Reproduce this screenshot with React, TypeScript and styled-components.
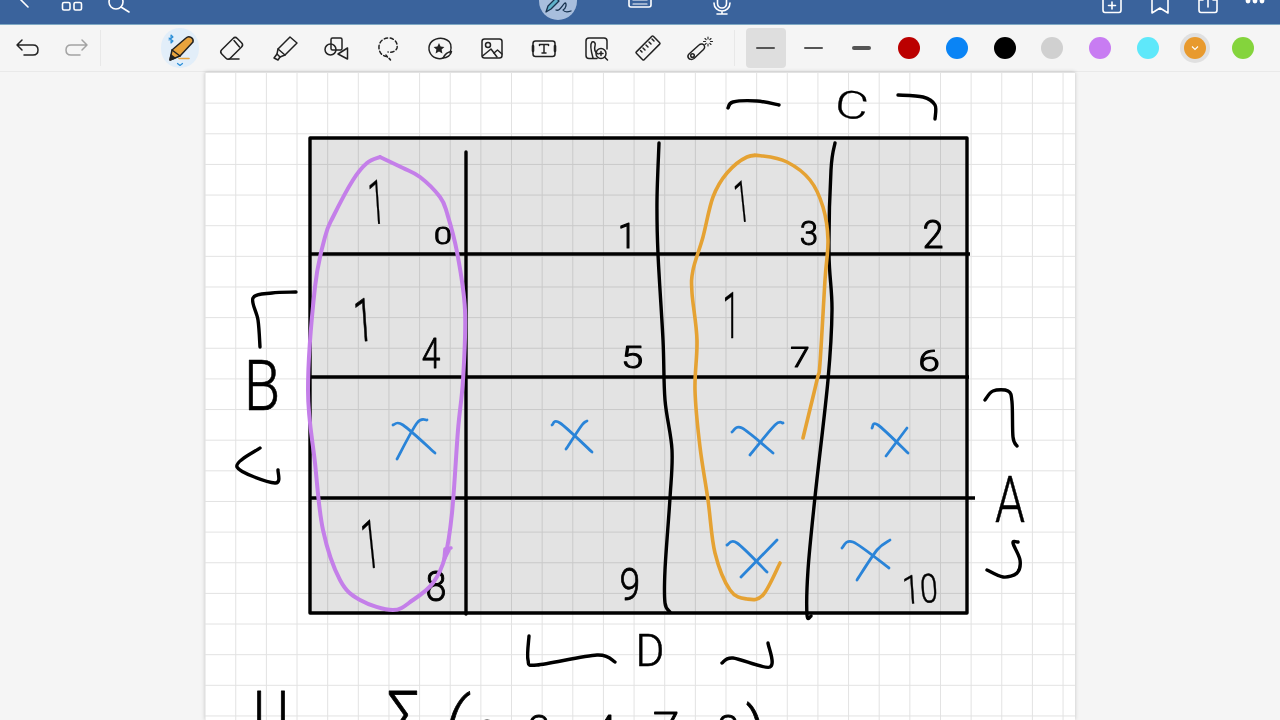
// notes app screenshot: toolbar on top, sheet with a hand drawn K-map
import React from "react";
import styled, { createGlobalStyle } from "styled-components";

const GlobalStyle = createGlobalStyle`
    html, body {
        margin: 0;
        padding: 0;
        background: #f5f5f5;
        font-family: "Lato", "Liberation Sans", sans-serif;
    }
`;

const Page = styled.div`
    width: 1280px;
    height: 720px;
    display: flex;
    flex-direction: column;
    overflow: hidden;
`;

const TopBar = styled.header`
    height: 24px;
    flex: none;
    display: flex;
    background: #3a639c;
    border-bottom: 1px solid #7fa9c4;
    overflow: hidden;
`;

const TopGroup = styled.div<{ $gap?: number; $left?: string }>`
    display: flex;
    gap: ${(props) => props.$gap ?? 0}px;
    margin-left: ${(props) => props.$left ?? "0"};
`;

const TopIcon = styled.svg`
    width: 48px;
    height: 24px;
    flex: none;
    fill: none;
    stroke: #fff;
    stroke-width: 1.6;
    stroke-linecap: round;
    stroke-linejoin: round;
`;

const ToolBar = styled.nav`
    height: 47px;
    flex: none;
    display: flex;
    align-items: center;
    background: #f5f5f5;
    border-bottom: 1px solid #e9e9e9;
    box-sizing: border-box;
    padding-left: 4px;
`;

const Divider = styled.div<{ $left: number; $right: number }>`
    width: 1px;
    height: 36px;
    background: #e8e8e8;
    margin-left: ${(props) => props.$left}px;
    margin-right: ${(props) => props.$right}px;
`;

const ToolButton = styled.button<{ $width: number }>`
    width: ${(props) => props.$width}px;
    height: 47px;
    flex: none;
    padding: 0;
    border: 0;
    background: transparent;
    display: flex;
    align-items: center;
    justify-content: center;
`;

const ToolIcon = styled.svg<{ $muted?: boolean }>`
    width: 36px;
    height: 36px;
    overflow: visible;
    fill: none;
    stroke: ${(props) => (props.$muted ? "#a3a3a3" : "#222")};
    stroke-width: 1.5;
    stroke-linecap: round;
    stroke-linejoin: round;
`;

const PenHalo = styled.div`
    width: 38px;
    height: 40px;
    border-radius: 19px;
    background: #e2eef9;
    display: flex;
    align-items: center;
    justify-content: center;
`;

const StrokeBox = styled.div<{ $active?: boolean }>`
    width: 40px;
    height: 40px;
    border-radius: 4px;
    background: ${(props) => (props.$active ? "#dedede" : "transparent")};
    display: flex;
    align-items: center;
    justify-content: center;
`;

const StrokeLine = styled.div<{ $thick: number }>`
    width: 19px;
    height: ${(props) => props.$thick}px;
    border-radius: 2px;
    background: #555;
`;

const SwatchRing = styled.div<{ $active?: boolean }>`
    width: 30px;
    height: 30px;
    border-radius: 50%;
    background: ${(props) => (props.$active ? "#e0e0e0" : "transparent")};
    display: flex;
    align-items: center;
    justify-content: center;
`;

const Swatch = styled.div<{ $color: string }>`
    width: 22px;
    height: 22px;
    border-radius: 50%;
    background: ${(props) => props.$color};
    display: flex;
    align-items: center;
    justify-content: center;
`;

const Workspace = styled.main`
    flex: 1;
    min-height: 0;
    display: flex;
    justify-content: center;
    background: #f5f5f5;
`;

const Sheet = styled.section`
    width: 870px;
    height: 100%;
    position: relative;
    background-color: #fff;
    background-image:
        linear-gradient(to right, #e2e2e2 1.2px, transparent 1.2px),
        linear-gradient(to bottom, #e2e2e2 1.2px, transparent 1.2px);
    background-size: 30.65px 30.65px;
    background-position: -0.4px 0;
    box-shadow: 0 0 4px rgba(0, 0, 0, 0.2);
`;

const Ink = styled.svg`
    position: absolute;
    inset: 0;
    width: 100%;
    height: 100%;
    fill: none;
    stroke-linecap: round;
    stroke-linejoin: round;
`;

const Shade = styled.rect`
    fill: #e3e3e3;
    mix-blend-mode: multiply;
`;

const InkText = styled.text`
    font-family: "Roboto", "Liberation Sans", sans-serif;
    font-weight: 300;
    fill: #000;
    stroke: #000;
    text-anchor: middle;
`;

type Pt = [number, number];

// catmull-rom through the points, good enough for pen strokes
const smooth = (pts: Pt[]) => {
    let d = `M${pts[0][0]} ${pts[0][1]}`;
    for (let i = 0; i < pts.length - 1; i++) {
        const p0 = pts[i - 1] ?? pts[i];
        const p1 = pts[i];
        const p2 = pts[i + 1];
        const p3 = pts[i + 2] ?? p2;
        const c1x = p1[0] + (p2[0] - p0[0]) / 6;
        const c1y = p1[1] + (p2[1] - p0[1]) / 6;
        const c2x = p2[0] - (p3[0] - p1[0]) / 6;
        const c2y = p2[1] - (p3[1] - p1[1]) / 6;
        d += ` C${c1x.toFixed(1)} ${c1y.toFixed(1)} ${c2x.toFixed(1)} ${c2y.toFixed(1)} ${p2[0]} ${p2[1]}`;
    }
    return d;
};

const blackStrokes: Pt[][] = [
    [[466, 152], [466, 614]],
    [[659, 143], [657, 200], [658, 254], [663, 340], [665, 400], [672, 450], [670, 498], [665, 570], [665, 603], [670, 612]],
    [[835, 143], [831, 170], [829, 254], [832, 310], [828, 380], [815, 497], [808, 570], [807, 615], [811, 616]],
    [[296, 292], [272, 293], [253, 298], [258, 320], [260, 347]],
    [[260, 448], [237, 467], [275, 483], [278, 470]],
    [[985, 400], [993, 391], [1008, 391], [1012, 402], [1013, 437], [1017, 446]],
    [[1018, 542], [1013, 543], [1020, 560], [1017, 573], [1003, 577], [987, 570]],
    [[728, 108], [733, 102], [757, 101], [779, 105]],
    [[898, 95], [923, 97], [935, 105], [935, 119]],
    [[529, 636], [528, 660], [537, 665], [597, 655], [615, 662]],
    [[722, 663], [733, 658], [770, 667], [768, 643]],
];

const purpleLoop: Pt[] = [
    [380, 157], [403, 168], [420, 177], [440, 197], [447, 213], [457, 252], [465, 310], [463, 380],
    [458, 430], [452, 513], [445, 557], [433, 583], [413, 600], [393, 610], [360, 600], [340, 580],
    [323, 530], [315, 463], [308, 390], [315, 287], [325, 237], [333, 217], [353, 180], [367, 163], [380, 157],
];

const orangeLoop: Pt[] = [
    [803, 438], [817, 380], [820, 363], [825, 280], [828, 240], [823, 207], [810, 180], [787, 162], [763, 156],
    [747, 157], [727, 173], [713, 197], [703, 237], [693, 270], [692, 293], [697, 340], [695, 390], [700, 447],
    [708, 500], [715, 553], [730, 590], [747, 599], [763, 595], [780, 563],
];

const crosses: Pt[][] = [
    [[393, 425], [403, 425], [435, 453]], [[427, 420], [417, 423], [397, 459]],
    [[552, 425], [560, 423], [592, 452]], [[587, 421], [582, 425], [566, 449]],
    [[732, 432], [742, 428], [773, 453]], [[783, 423], [775, 425], [750, 455]],
    [[872, 428], [878, 425], [908, 453]], [[907, 428], [886, 456]],
    [[727, 545], [737, 543], [767, 572]], [[777, 540], [741, 577]],
    [[842, 548], [853, 542], [889, 568]], [[890, 540], [877, 550], [857, 580]],
];

interface IMark {
    t: string;
    x: number;
    y: number;
    s: number;
    sx?: number;
    r?: number;
    w?: number;
}

const marks: IMark[] = [
    { t: "1", x: 378, y: 224, s: 62, sx: 0.5, r: -4, w: 0.4 },
    { t: "1", x: 365, y: 341, s: 60, sx: 0.6, r: -4, w: 0.8 },
    { t: "1", x: 373, y: 568, s: 68, sx: 0.5, r: -6, w: 0.3 },
    { t: "1", x: 744, y: 222, s: 58, sx: 0.5, r: -6, w: 0.3 },
    { t: "1", x: 731, y: 338, s: 64, sx: 0.5, r: 0, w: 0.3 },
    { t: "0", x: 443, y: 244, s: 23, sx: 1.4, w: 1 },
    { t: "1", x: 627, y: 248, s: 36, sx: 0.9, w: 1.2 },
    { t: "3", x: 809, y: 245, s: 33, w: 1 },
    { t: "2", x: 933, y: 248, s: 38, w: 1 },
    { t: "4", x: 431, y: 368, s: 42, sx: 0.8, w: 0.8 },
    { t: "5", x: 632, y: 368, s: 32, sx: 1.25, w: 1 },
    { t: "7", x: 800, y: 367, s: 28, sx: 1.25, w: 1 },
    { t: "6", x: 929, y: 371, s: 30, sx: 1.3, w: 1 },
    { t: "8", x: 436, y: 601, s: 42, sx: 0.9, w: 1 },
    { t: "9", x: 630, y: 600, s: 44, sx: 0.85, w: 0.8 },
    { t: "10", x: 921, y: 603, s: 40, sx: 0.8, r: -4, w: 0.5 },
    { t: "C", x: 850, y: 118, s: 38, sx: 1.35, r: 8, w: 0.3 },
    { t: "B", x: 262, y: 410, s: 70, sx: 0.85, w: 0.6 },
    { t: "A", x: 1010, y: 522, s: 64, sx: 0.75, w: 0.6 },
    { t: "D", x: 650, y: 666, s: 44, w: 0.6 },
    { t: "U", x: 271, y: 733, s: 60, sx: 0.9, w: 0.8 },
    { t: "Σ", x: 404, y: 741, s: 70, sx: 0.85, w: 0.8 },
    { t: "(", x: 452, y: 745, s: 70, sx: 0.9, r: 10, w: 0.8 },
    { t: "0", x: 487, y: 749, s: 40, w: 0.8 },
    { t: "3", x: 539, y: 744, s: 40, w: 0.8 },
    { t: "4", x: 605, y: 744, s: 40, w: 0.8 },
    { t: "7", x: 666, y: 741, s: 40, sx: 1.2, w: 0.8 },
    { t: "8", x: 728, y: 744, s: 40, w: 0.8 },
    { t: ")", x: 756, y: 758, s: 70, sx: 0.9, w: 0.8 },
];

const swatches = ["#bb0000", "#0a84f5", "#000000", "#d0d0d0", "#c87cf2", "#5ee8fa", "#e89a2e", "#84d43c"];

const PenIcon = () => (
    <ToolIcon viewBox="0 0 36 36">
        <path d="M8 30 L10 20 L24 8 C27 5 32 8 31 12 L18 26 Z" fill="#e8a33d" />
        <path d="M10 20 L18 26" />
        <path d="M8 30 L9 25 L13 28 Z" fill="#222" />
        <path d="M17 28.5 H27" stroke="#e8a33d" strokeWidth="1.6" />
        <path d="M7 8 L11 11 L9 13 V5 L11 7 L7 10" stroke="#2b8fd8" strokeWidth="1.1" />
        <path d="M15.5 33.5 L18 35.5 L20.5 33.5" stroke="#2b8fd8" strokeWidth="1.2" />
    </ToolIcon>
);

const EraserIcon = () => (
    <ToolIcon viewBox="0 0 36 36">
        <rect x="12" y="7.5" width="12" height="22" rx="3" transform="rotate(45 18 18)" />
        <path d="M20 10.5 L25.5 17" />
        <path d="M15 29 H25" />
    </ToolIcon>
);

const MarkerIcon = () => (
    <ToolIcon viewBox="0 0 36 36">
        <path d="M12 19 L24 7 L31 13 L19 25 Z" />
        <path d="M12 19 L11 24 L14 27 L19 25" />
        <path d="M11 24 L8 28 L12 30 L14 27" />
    </ToolIcon>
);

const ShapesIcon = () => (
    <ToolIcon viewBox="0 0 36 36">
        <rect x="13" y="8" width="11" height="12" rx="1.5" />
        <circle cx="12.5" cy="19.5" r="5.5" />
        <path d="M29.5 18 V29 L20 24 Z" />
    </ToolIcon>
);

const LassoIcon = () => (
    <ToolIcon viewBox="0 0 36 36">
        <path d="M17 26.5 C11 26 8.5 21 9 16 C10 10 15 7.5 20 8 C25 9 28 13 27 18 C26 21 22 23 18 22" strokeDasharray="3.4 2.6" />
        <path d="M16 25 C17 27 19 28 20.5 30" strokeDasharray="2.5 2.2" />
    </ToolIcon>
);

const StickerIcon = () => (
    <ToolIcon viewBox="0 0 36 36">
        <path d="M28 23 C30 17 29 12 25 10 C20 7 12 8 8.5 13 C5 19 8 26 14 28 C17 29 19 29 21 28" />
        <path d="M21 28 C23 24 25 22 29.5 21.5 C29 25 25 28 21 28 Z" />
        <path d="M17 13 L18.6 16.6 L22.4 17 L19.6 19.6 L20.4 23.4 L17 21.4 L13.6 23.4 L14.4 19.6 L11.6 17 L15.4 16.6 Z" fill="#222" stroke="none" />
    </ToolIcon>
);

const ImageIcon = () => (
    <ToolIcon viewBox="0 0 36 36">
        <rect x="8" y="9" width="20" height="19" rx="2.5" />
        <circle cx="14" cy="15" r="2.5" />
        <path d="M8.5 26 L17 19 L23 27" />
        <path d="M20 23 L23.5 20 L28 24" />
    </ToolIcon>
);

const TextIcon = () => (
    <ToolIcon viewBox="0 0 36 36">
        <rect x="7" y="11" width="22" height="15.5" rx="2.5" />
        <path d="M13.5 15.5 V14.5 H22.5 V15.5 M18 14.5 V23 M16 23 H20" />
        <path d="M7 16 V21 M29 16 V21" strokeWidth="2.6" />
    </ToolIcon>
);

const ScanIcon = () => (
    <ToolIcon viewBox="0 0 36 36">
        <path d="M19 28.5 H11 C9 28.5 8 27.5 8 25.5 V11 C8 9 9 8 11 8 H26 C28 8 29 9 29 11 V19" />
        <path d="M15 28 C13 21 12 14 14 12 C16 11 18 13 17 16 C16 19 17 22 20 24" />
        <circle cx="23" cy="23.5" r="5" />
        <path d="M21 23.5 H25 M23 21.5 V25.5 M27 27.5 L29.5 30" />
    </ToolIcon>
);

const RulerIcon = () => (
    <ToolIcon viewBox="0 0 36 36">
        <rect x="12.5" y="6" width="11" height="24" rx="1" transform="rotate(45 18 18)" />
        <path d="M13 18 L15 20 M16 15 L18 17 M19 12 L21 14 M22 9 L24 11 M10.5 20.5 L12 22" />
    </ToolIcon>
);

const LaserIcon = () => (
    <ToolIcon viewBox="0 0 36 36">
        <path d="M7 24 L17 15 C19 13 22 14 22.5 16 C23 17.5 22.5 18.5 21.5 19.5 L12 28.5 C10 30 7.5 29.5 6.5 28 C5.5 26.5 5.5 25.5 7 24 Z" />
        <circle cx="10.5" cy="25.5" r="1.8" />
        <path d="M26 7 V9 M26 14 V16 M21.5 11.5 H23.5 M28.5 11.5 H30.5 M23 8.5 L24.2 9.7 M27.8 13.3 L29 14.5 M29 8.5 L27.8 9.7 M24.2 13.3 L23 14.5" strokeWidth="1.1" />
    </ToolIcon>
);

const tools = [PenIcon, EraserIcon, MarkerIcon, ShapesIcon, LassoIcon, StickerIcon, ImageIcon, TextIcon, ScanIcon, RulerIcon, LaserIcon];

function Header() {
    return (
        <TopBar>
            <TopGroup>
                <TopIcon viewBox="0 0 48 24"><path d="M20 -1 L28 7" /></TopIcon>
                <TopIcon viewBox="0 0 48 24">
                    <rect x="14.5" y="2.5" width="7.5" height="7.5" rx="1.5" />
                    <rect x="26" y="2.5" width="7.5" height="7.5" rx="1.5" />
                </TopIcon>
                <TopIcon viewBox="0 0 48 24">
                    <circle cx="20" cy="2" r="7" />
                    <path d="M25 7 L33 12" />
                </TopIcon>
            </TopGroup>
            <TopGroup $gap={34} $left="390px">
                <TopIcon viewBox="0 0 48 24">
                    <circle cx="24" cy="1" r="19" fill="#a8bedd" stroke="none" />
                    <path d="M12 12 L14 6 L22 -2 L25 1 L17 9 Z" stroke="#17324f" fill="#5fb0c9" strokeWidth="1.3" />
                    <path d="M22 10 C26 12 28 5 31 3 C33 3 32 9 29 10 C31 13 34 12 37 11" stroke="#17324f" strokeWidth="1.3" />
                </TopIcon>
                <TopIcon viewBox="0 0 48 24">
                    <rect x="13" y="-6" width="22" height="13" rx="2" />
                    <path d="M17 4 H31 M17 0 H31" strokeWidth="1.2" />
                </TopIcon>
                <TopIcon viewBox="0 0 48 24">
                    <rect x="19.5" y="-6" width="9" height="14" rx="4.5" />
                    <path d="M16 3 C16 8 20 11 24 11 C28 11 32 8 32 3 M24 11 V14 M19 14 H29" />
                </TopIcon>
            </TopGroup>
            <TopGroup $left="auto">
                <TopIcon viewBox="0 0 48 24">
                    <path d="M15 0 V10 C15 11.5 16 12.5 17 12.5 H31 C32 12.5 33 11.5 33 10 V0" />
                    <path d="M24 2 V9 M20.5 5.5 H27.5" />
                </TopIcon>
                <TopIcon viewBox="0 0 48 24"><path d="M16 -2 V13 L24 8 L32 13 V-2" /></TopIcon>
                <TopIcon viewBox="0 0 48 24">
                    <path d="M19 0 H15 V10 C15 11.5 16 12.5 17 12.5 H31 C32 12.5 33 11.5 33 10 V0 H29" />
                    <path d="M24 -2 V7" />
                </TopIcon>
                <TopIcon viewBox="0 0 48 24">
                    <circle cx="16" cy="1" r="1.6" fill="#fff" />
                    <circle cx="23" cy="1" r="1.6" fill="#fff" />
                    <circle cx="30" cy="1" r="1.6" fill="#fff" />
                </TopIcon>
            </TopGroup>
        </TopBar>
    );
}

function Tools() {
    return (
        <ToolBar>
            <ToolButton $width={48}>
                <ToolIcon viewBox="0 0 36 36">
                    <path d="M12 10 L7 15 L12 20 M7 15 H23 C26 15 28 17 28 20 C28 23 26 25 23 25 H14" />
                </ToolIcon>
            </ToolButton>
            <ToolButton $width={48}>
                <ToolIcon viewBox="0 0 36 36" $muted>
                    <path d="M24 10 L29 15 L24 20 M29 15 H13 C10 15 8 17 8 20 C8 23 10 25 13 25 H22" />
                </ToolIcon>
            </ToolButton>
            <Divider $left={0} $right={53} />
            {tools.map((Icon, i) => (
                <ToolButton $width={52} key={i}>
                    {i === 0 ? <PenHalo><Icon /></PenHalo> : <Icon />}
                </ToolButton>
            ))}
            <Divider $left={8} $right={7} />
            {[2, 2.5, 4].map((thick, i) => (
                <ToolButton $width={47.8} key={thick}>
                    <StrokeBox $active={i === 0}><StrokeLine $thick={thick} /></StrokeBox>
                </ToolButton>
            ))}
            {swatches.map((color, i) => (
                <ToolButton $width={47.7} key={color}>
                    <SwatchRing $active={i === 6}>
                        <Swatch $color={color}>
                            {i === 6 && (
                                <svg width="8" height="6" viewBox="0 0 8 6" fill="none" stroke="#fff" strokeWidth="1.1">
                                    <path d="M1 1.5 L4 4.5 L7 1.5" />
                                </svg>
                            )}
                        </Swatch>
                    </SwatchRing>
                </ToolButton>
            ))}
        </ToolBar>
    );
}

function KarnaughInk() {
    return (
        <Ink viewBox="205 72 870 648">
            <Shade x="310" y="138" width="657" height="475" />
            <g stroke="#000" strokeWidth="3.4" strokeLinecap="butt">
                <rect x="310" y="138" width="657" height="475" />
                <path d="M311 254 H970 M311 377 H969 M311 498 H975" />
            </g>
            <g stroke="#000" strokeWidth="3.4">
                {blackStrokes.map((pts, i) => <path key={i} d={smooth(pts)} />)}
            </g>
            {marks.map((m, i) => (
                <InkText
                    key={i}
                    fontSize={m.s}
                    strokeWidth={m.w ?? 0.5}
                    transform={`translate(${m.x} ${m.y}) rotate(${m.r ?? 0}) scale(${m.sx ?? 1} 1)`}
                >
                    {m.t}
                </InkText>
            ))}
            <g stroke="#2a84d8" strokeWidth="2.8">
                {crosses.map((pts, i) => <path key={i} d={smooth(pts)} />)}
            </g>
            <path d={smooth(purpleLoop)} stroke="#c47fe9" strokeWidth="4" />
            <path d="M451 548 L445 549 L444 560 L449 550" stroke="#c47fe9" strokeWidth="3.5" />
            <path d={smooth(orangeLoop)} stroke="#e5a233" strokeWidth="3.6" />
        </Ink>
    );
}

function App() {
    return (
        <Page>
            <GlobalStyle />
            <Header />
            <Tools />
            <Workspace>
                <Sheet>
                    <KarnaughInk />
                </Sheet>
            </Workspace>
        </Page>
    );
}

export default App;
